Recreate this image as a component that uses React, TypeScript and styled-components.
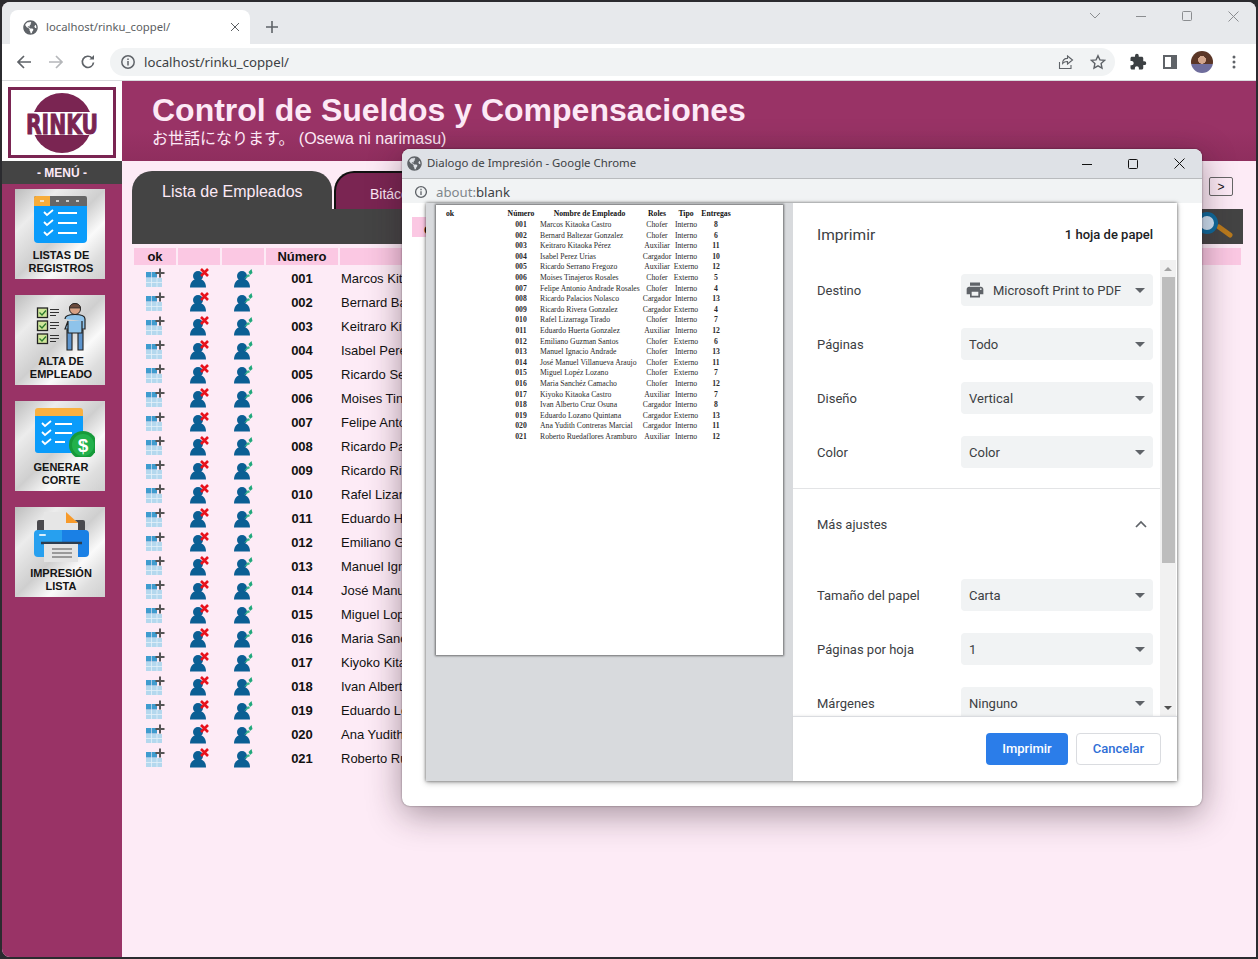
import React from "react";
import styled, { createGlobalStyle } from "styled-components";
import { FaGlobeAmericas } from "react-icons/fa";
import { MdExtension, MdPrint } from "react-icons/md";

const Global = createGlobalStyle`
  html, body { margin: 0; padding: 0; background: #2b2b2f; }
  * { box-sizing: border-box; }
`;

const Screen = styled.div`
  position: relative;
  width: 1258px;
  height: 959px;
  padding: 2px;
  background: #2b2b2f;
  overflow: hidden;
  font-family: "Liberation Sans", Arial, sans-serif;
`;
const Browser = styled.div`
  width: 1254px;
  height: 955px;
  border-radius: 8px 8px 0 8px;
  overflow: hidden;
  display: flex;
  flex-direction: column;
  background: #fdebf6;
`;
const TabStrip = styled.div`
  height: 42px;
  flex: none;
  background: #e7e9ec;
  display: flex;
  align-items: flex-end;
  padding-left: 8px;
`;
const BrowserTab = styled.div`
  width: 240px;
  height: 34px;
  background: #fff;
  border-radius: 8px 8px 0 0;
  display: flex;
  align-items: center;
  padding: 0 10px 0 13px;
  gap: 8px;
  color: #5b5e62;
  font: 11.3px "Noto Sans", sans-serif;
`;
const TabTitle = styled.span`
  flex: 1;
  padding-bottom: 2px;
`;
const NewTab = styled.div`
  width: 44px;
  height: 34px;
  display: flex;
  align-items: center;
  justify-content: center;
`;
const WindowControls = styled.div`
  margin-left: auto;
  height: 42px;
  display: flex;
  align-items: center;
  padding: 0 0 14px 0;
`;
const WindowButton = styled.div`
  width: 46px;
  display: flex;
  justify-content: center;
  color: #8b8d90;
`;
const Toolbar = styled.div`
  height: 36px;
  flex: none;
  background: #fff;
  display: flex;
  align-items: center;
  color: #5f6368;
`;
const NavButton = styled.div<{ $c?: string }>`
  width: 32px;
  display: flex;
  justify-content: center;
  color: ${(p) => p.$c ?? "#5f6368"};
`;
const NavGroup = styled.div`
  display: flex;
  padding-left: 6px;
  width: 108px;
  flex: none;
`;
const Omnibox = styled.div`
  width: 1005px;
  height: 28px;
  flex: none;
  border-radius: 14px;
  background: #f1f3f4;
  display: flex;
  align-items: center;
  padding: 0 1px 0 10px;
  gap: 8px;
  font: 13.2px "Noto Sans", sans-serif;
  color: #3c4043;
`;
const OmniText = styled.span`
  flex: 1;
`;
const OmniIcons = styled.div`
  display: flex;
  align-items: center;
`;
const OmniIcon = styled.div`
  width: 32px;
  display: flex;
  justify-content: center;
  color: #5f6368;
`;
const Avatar = styled.div`
  width: 22px;
  height: 22px;
  border-radius: 50%;
  background: radial-gradient(circle at 50% 40%, #d2a58c 0 22%, transparent 24%),
    linear-gradient(180deg, #5b3626 0 58%, #6f6d9c 60%);
`;
const ToolbarEnd = styled.div`
  display: flex;
  align-items: center;
  padding-left: 7px;
`;
const Divider = styled.div`
  height: 1px;
  flex: none;
  background: #d9dbde;
`;

const Page = styled.div`
  flex: 1;
  display: flex;
  min-height: 0;
`;
const Sidebar = styled.aside`
  width: 120px;
  flex: none;
  background: #993366;
  display: flex;
  flex-direction: column;
  align-items: center;
`;
const LogoArea = styled.div`
  width: 100%;
  height: 80px;
  background: #fff;
  padding: 6px 6px 3px 6px;
  flex: none;
`;
const LogoFrame = styled.div`
  width: 108px;
  height: 71px;
  border: 3px solid #7a2552;
  display: flex;
  align-items: center;
  justify-content: center;
`;
const MenuBar = styled.div`
  width: 100%;
  height: 23px;
  flex: none;
  background: #444;
  color: #fde9f6;
  font-size: 12px;
  font-weight: bold;
  display: flex;
  align-items: center;
  justify-content: center;
  margin-bottom: 5px;
`;
const MenuList = styled.div`
  display: flex;
  flex-direction: column;
  gap: 16px;
  margin-right: 4px;
`;
const MenuCard = styled.div`
  width: 90px;
  height: 90px;
  background: linear-gradient(135deg, #bcbcbc 0%, #ececec 24%, #cfcfcf 50%, #fafafa 68%, #dedede 84%, #cfcfcf 100%);
  display: flex;
  flex-direction: column;
  align-items: center;
  padding-top: 4px;
`;
const CardIcon = styled.svg`
  width: 70px;
  height: 52px;
  flex: none;
  display: block;
`;
const CardLabel = styled.div`
  font-size: 11px;
  line-height: 13px;
  font-weight: bold;
  color: #141414;
  text-align: center;
  margin-top: 4px;
  padding-left: 2px;
`;

const Main = styled.main`
  flex: 1;
  min-width: 0;
  display: flex;
  flex-direction: column;
`;
const Header = styled.header`
  height: 80px;
  flex: none;
  background: linear-gradient(180deg, #993366 0%, #993366 60%, #8f2e5e 100%);
  color: #fde9f6;
  padding: 11px 0 0 30px;
`;
const Title = styled.h1`
  margin: 0;
  font-size: 32px;
  line-height: 36px;
  font-weight: bold;
`;
const Subtitle = styled.div`
  font: 16px/20px "Liberation Sans", "Noto Sans CJK JP", sans-serif;
  margin-top: 1px;
`;
const Content = styled.div`
  flex: 1;
  padding: 10px 13px 0 10px;
  display: flex;
  flex-direction: column;
`;
const TabsRow = styled.div`
  display: flex;
  height: 38px;
  gap: 2px;
  flex: none;
`;
const ActiveTab = styled.div`
  width: 200px;
  height: 38px;
  background: #444;
  color: #fde9f6;
  border-radius: 20px 20px 0 0;
  font-size: 16px;
  padding: 12px 0 0 30px;
`;
const OtherTab = styled.div`
  width: 200px;
  height: 38px;
  background: #7a2552;
  border: 2px solid #111;
  border-bottom: none;
  border-radius: 20px 20px 0 0;
  color: #fde9f6;
  font-size: 14px;
  padding: 13px 0 0 34px;
`;
const NextButton = styled.button`
  margin: 6px 10px 0 auto;
  width: 24px;
  height: 19px;
  padding: 0;
  border: 1px solid #666;
  border-radius: 2px;
  background: #fdebf6;
  color: #111;
  font: 12px "Liberation Sans", sans-serif;
`;
const Panel = styled.div`
  height: 35px;
  flex: none;
  background: #444;
  display: flex;
  justify-content: flex-end;
  align-items: center;
  padding-right: 9px;
`;
const Table = styled.div`
  margin: 4px 2px 0 2px;
  display: grid;
  grid-template-columns: 42px 42px 42px 72px 1fr;
  column-gap: 2px;
  grid-auto-rows: 24px;
`;
const HeadCell = styled.div`
  height: 17px;
  background: #fbc8e3;
  color: #111;
  font-size: 13px;
  font-weight: bold;
  line-height: 18px;
  text-align: center;
`;
const HeadRow = styled.div`
  display: contents;
`;
const IconCell = styled.div`
  display: flex;
  align-items: center;
  justify-content: center;
  height: 24px;
  margin-top: -6px;
`;
const NumCell = styled.div`
  font-size: 13px;
  font-weight: bold;
  color: #111;
  text-align: center;
  line-height: 24px;
  margin-top: -5px;
`;
const NameCell = styled.div`
  font-size: 13px;
  color: #111;
  line-height: 24px;
  margin-top: -5px;
  padding-left: 1px;
`;

/* Print dialog: a window floating over the page */
const Dialog = styled.section`
  position: absolute;
  left: 402px;
  top: 149px;
  width: 800px;
  height: 657px;
  background: #fff;
  border-radius: 8px;
  overflow: hidden;
  box-shadow: 0 8px 34px rgba(40, 20, 30, 0.42), 0 0 2px rgba(0, 0, 0, 0.5);
  display: flex;
  flex-direction: column;
`;
const DialogTitleBar = styled.div`
  height: 30px;
  flex: none;
  background: #dee1e6;
  border-bottom: 1px solid #b9bbbe;
  display: flex;
  align-items: center;
  padding-left: 5px;
  color: #3c4043;
  font: 11.4px "Noto Sans", sans-serif;
`;
const DialogTitle = styled.span`
  flex: 1;
  margin-left: 5px;
  padding-bottom: 2px;
`;
const DialogControl = styled.div`
  width: 46px;
  display: flex;
  justify-content: center;
  color: #111;
`;
const DialogAddress = styled.div`
  height: 24px;
  flex: none;
  background: #f1f3f4;
  display: flex;
  align-items: center;
  padding: 2px 0 0 12px;
  gap: 8px;
  font: 13.2px "Noto Sans", sans-serif;
  color: #3c4043;
`;
const Muted = styled.span`
  color: #80868b;
`;
const DialogBody = styled.div`
  position: relative;
  flex: 1;
  padding: 14px 0 0 10px;
`;
const BlankPink = styled.div`
  width: 14px;
  height: 20px;
  background: #fbc8e3;
  overflow: hidden;
  padding-left: 12px;
  font: bold 14px/24px "Liberation Sans", sans-serif;
  white-space: nowrap;
  color: #111;
`;
const PrintSheet = styled.div`
  position: absolute;
  left: 24px;
  top: 0;
  width: 751px;
  height: 578px;
  background: #fff;
  box-shadow: 0 0 3px rgba(0, 0, 0, 0.55), 0 2px 6px rgba(0, 0, 0, 0.25);
  display: flex;
`;
const Preview = styled.div`
  width: 367px;
  flex: none;
  background: #d8dadd;
  padding: 2px 0 0 10px;
`;
const Paper = styled.div`
  width: 347px;
  height: 450px;
  background: #fff;
  box-shadow: 0 0 2px 1px rgba(0, 0, 0, 0.5);
  padding: 4px 0 0 9px;
  font-family: "Liberation Serif", "Times New Roman", serif;
  font-size: 7.7px;
  color: #222;
`;
const PaperRow = styled.div<{ $head?: boolean }>`
  display: grid;
  grid-template-columns: 60px 32px 105px 30px 28px 32px;
  height: ${(p) => (p.$head ? "11px" : "10.6px")};
  line-height: 10.6px;
  font-weight: ${(p) => (p.$head ? "bold" : "normal")};
  color: ${(p) => (p.$head ? "#111" : "#2a2a2a")};
  white-space: nowrap;
`;
const PaperCell = styled.span<{ $bold?: boolean; $left?: boolean; $pad?: number }>`
  text-align: ${(p) => (p.$left ? "left" : "center")};
  font-weight: ${(p) => (p.$bold ? "bold" : "inherit")};
  padding-left: ${(p) => p.$pad ?? 0}px;
`;
const Settings = styled.div`
  flex: 1;
  min-width: 0;
  display: flex;
  flex-direction: column;
  font: 13px Roboto, sans-serif;
  color: #3c4043;
`;
const SettingsHead = styled.div`
  height: 57px;
  flex: none;
  display: flex;
  justify-content: space-between;
  align-items: center;
  padding: 6px 24px 0 24px;
`;
const SettingsTitle = styled.div`
  font-size: 15.5px;
  color: #3c4043;
`;
const SheetCount = styled.div`
  font-size: 13px;
  font-weight: 500;
  color: #202124;
`;
const ScrollArea = styled.div`
  height: 456px;
  flex: none;
  display: flex;
  overflow: hidden;
`;
const ScrollContent = styled.div`
  flex: 1;
  min-width: 0;
  padding-top: 14px;
`;
const SettingRow = styled.div<{ $after?: number }>`
  height: 32px;
  display: flex;
  align-items: center;
  justify-content: space-between;
  padding: 0 7px 0 24px;
  margin-bottom: ${(p) => p.$after ?? 22}px;
`;
const Select = styled.div`
  width: 192px;
  height: 32px;
  background: #f1f3f4;
  border-radius: 4px;
  display: flex;
  align-items: center;
  padding: 0 8px;
  gap: 8px;
  color: #3c4043;
`;
const SelectIcon = styled.span`
  display: flex;
  margin-left: -4px;
`;
const SelectText = styled.span`
  flex: 1;
`;
const Caret = styled.span`
  width: 0;
  height: 0;
  border-left: 5px solid transparent;
  border-right: 5px solid transparent;
  border-top: 5px solid #5f6368;
`;
const Rule = styled.div`
  height: 1px;
  background: #e3e4e6;
  margin: 20px 0 19px 0;
`;
const Scrollbar = styled.div`
  width: 16px;
  flex: none;
  background: #f1f1f1;
  display: flex;
  flex-direction: column;
  align-items: center;
  margin-right: 1px;
`;
const ScrollArrow = styled.div<{ $down?: boolean }>`
  height: 17px;
  flex: none;
  display: flex;
  align-items: center;
  justify-content: center;
  &::after {
    content: "";
    border-left: 4px solid transparent;
    border-right: 4px solid transparent;
    ${(p) => (p.$down ? "border-top: 4px solid #505050;" : "border-bottom: 4px solid #a3a3a3;")}
  }
`;
const ScrollThumb = styled.div`
  width: 13px;
  height: 286px;
  background: #bdbdbd;
  flex: none;
`;
const ScrollFill = styled.div`
  flex: 1;
`;
const Footer = styled.div`
  flex: 1;
  border-top: 1px solid #dadce0;
  box-shadow: 0 -1px 2px rgba(0, 0, 0, 0.06);
  display: flex;
  justify-content: flex-end;
  align-items: flex-start;
  gap: 8px;
  padding: 16px 16px 0 0;
`;
const PrimaryButton = styled.button`
  width: 82px;
  height: 32px;
  border: none;
  border-radius: 4px;
  padding: 0 0 2px;
  background: #2b7de9;
  color: #fff;
  font: 500 13px Roboto, sans-serif;
`;
const SecondaryButton = styled.button`
  width: 85px;
  height: 32px;
  border: 1px solid #dadce0;
  border-radius: 4px;
  padding: 0 0 2px;
  background: #fff;
  color: #2f6fd6;
  font: 500 13px Roboto, sans-serif;
`;

const names = [
  "Marcos Kitaoka Castro", "Bernard Baltezar Gonzalez", "Keitraro Kitaoka Pérez", "Isabel Perez Urias",
  "Ricardo Serrano Fregozo", "Moises Tinajeros Rosales", "Felipe Antonio Andrade Rosales", "Ricardo Palacios Nolasco",
  "Ricardo Rivera Gonzalez", "Rafel Lizarraga Tirado", "Eduardo Huerta Gonzalez", "Emiliano Guzman Santos",
  "Manuel Ignacio Andrade", "José Manuel Villanueva Araujo", "Miguel Lopéz Lozano", "Maria Sanchéz Camacho",
  "Kiyoko Kitaoka Castro", "Ivan Alberto Cruz Osuna", "Eduardo Lozano Quintana", "Ana Yudith Contreras Marcial",
  "Roberto Ruedaflores Aramburo",
];
const roles = ["Chofer","Chofer","Auxiliar","Cargador","Auxiliar","Chofer","Chofer","Cargador","Cargador","Chofer","Auxiliar","Chofer","Chofer","Chofer","Chofer","Chofer","Auxiliar","Cargador","Cargador","Cargador","Auxiliar"];
const tipos = ["Interno","Interno","Interno","Interno","Externo","Externo","Interno","Interno","Externo","Interno","Interno","Externo","Interno","Externo","Externo","Interno","Interno","Interno","Externo","Interno","Interno"];
const entregas = [8,6,11,10,12,5,4,13,4,7,12,6,13,11,7,12,7,8,13,11,12];
const pad = (n: number) => String(n).padStart(3, "0");

const Line = ({ w = 10, h = 10, d }: { w?: number; h?: number; d: string }) => (
  <svg width={w} height={h} viewBox={`0 0 ${w} ${h}`} fill="none" stroke="currentColor" strokeWidth="1">
    <path d={d} />
  </svg>
);

const InfoIcon = ({ s = 16 }: { s?: number }) => (
  <svg width={s} height={s} viewBox="0 0 16 16" fill="none" stroke="#5f6368" strokeWidth="1.5">
    <circle cx="8" cy="8" r="6.2" />
    <path d="M8 7v4.4M8 4.4v1.5" />
  </svg>
);

const AddIcon = () => (
  <svg width="20" height="20" viewBox="0 0 20 20">
    <path d="M1 4h5.400v5.400H1zM7 4h5v5.400H7z" fill="#3f9ccf" />
    <path d="M1 10h16v9H1z" fill="#b4d8ee" />
    <path d="M1 14.500h16M6.500 10v9M12 10v9" stroke="#e4f1f9" strokeWidth=".8" />
    <path d="M15 .5v9M10.500 5h9" stroke="#555" strokeWidth="2" />
  </svg>
);
const Person = () => (
  <>
    <circle cx="9" cy="8" r="5" fill="#0b5f94" />
    <path d="M1 19.500c0-6 3.500-8.500 8-8.500s8 2.500 8 8.500z" fill="#0b5f94" />
  </>
);
const DeleteIcon = () => (
  <svg width="20" height="20" viewBox="0 0 20 20">
    <Person />
    <path d="M12 1l7 7M19 1l-7 7" stroke="#e8121c" strokeWidth="2.6" />
  </svg>
);
const EditIcon = () => (
  <svg width="20" height="20" viewBox="0 0 20 20">
    <Person />
    <path d="M11 11l4-5 2.200 2z" fill="#35b58c" />
    <path d="M15.500 4l3-3 1 4-2.500 2z" fill="#21a87c" />
  </svg>
);
const SearchIcon = () => (
  <svg width="44" height="30" viewBox="0 0 44 30">
    <path d="M29 15l11 8" stroke="#b97a1d" strokeWidth="5" strokeLinecap="round" />
    <circle cx="17" cy="11" r="9" fill="#cfe4f5" stroke="#0d6a9c" strokeWidth="4" />
  </svg>
);

const Check = ({ x, y, c = "#fff" }: { x: number; y: number; c?: string }) => (
  <path d={`M${x} ${y}l3 3 6-5`} fill="none" stroke={c} strokeWidth="1.8" />
);

const ListsIcon = () => (
  <CardIcon viewBox="0 0 70 52">
    <path d="M9 5a2 2 0 0 1 2-2h49a2 2 0 0 1 2 2v8H9z" fill="#666" />
    <path d="M9 5a2 2 0 0 1 2-2h14v10H9z" fill="#f7ac3a" />
    <path d="M9 13h53v33a4 4 0 0 1-4 4H13a4 4 0 0 1-4-4z" fill="#0a9cfb" />
    <path d="M15 8h4M31 8h3M41 8h3M51 8h3" stroke="#eee" strokeWidth="1.4" />
    <Check x={19} y={19} />
    <Check x={19} y={29} />
    <Check x={19} y={39} />
    <path d="M33 20h19M33 30h19M33 40h19" stroke="#fff" strokeWidth="2" />
  </CardIcon>
);
const HireIcon = () => (
  <CardIcon viewBox="0 0 70 52">
    {[9, 22, 35].map((y) => (
      <g key={y}>
        <rect x="12.5" y={y} width="10" height="9.5" fill="#cfe69a" stroke="#222" strokeWidth="1.3" />
        <path d={`M14.5 ${y + 4.5}l2.5 2.5 4-4.5`} fill="none" stroke="#2c7a2e" strokeWidth="1.3" />
        <path d={`M25 ${y + 1.5}h9M25 ${y + 4.5}h9M25 ${y + 7.5}h6`} stroke="#333" strokeWidth="1.2" />
      </g>
    ))}
    <g transform="translate(0 2)">
      <circle cx="50" cy="8" r="5.5" fill="#d8a184" stroke="#222" strokeWidth="1" />
      <path d="M44.5 7c0-6 11-6 11 0z" fill="#6b4a3c" stroke="#222" strokeWidth=".7" />
      <path d="M47 29v20h-5V29zM53 29v20h5V29z" fill="#5d94cd" stroke="#222" strokeWidth="1.1" />
      <path d="M40 18c0-3 3-4.500 10-4.500s10 1.500 10 4.500v10h-3v-8M43 20v8h-3zM43 20v12h14V20" fill="#8ec3ea" stroke="#222" strokeWidth="1.2" />
    </g>
  </CardIcon>
);
const CutIcon = () => (
  <CardIcon viewBox="0 0 70 52">
    <path d="M10 6a3 3 0 0 1 3-3h42a3 3 0 0 1 3 3v6H10z" fill="#f9b03f" />
    <path d="M10 11h48v34a3 3 0 0 1-3 3H13a3 3 0 0 1-3-3z" fill="#0a9cfb" />
    <Check x={17} y={18} />
    <Check x={17} y={27} />
    <Check x={17} y={36} />
    <path d="M30 19h17M30 28h17M30 37h10" stroke="#fff" strokeWidth="2" />
    <circle cx="58" cy="40" r="14" fill="#169a3a" />
    <circle cx="58" cy="40" r="11" fill="#22b14c" />
    <text x="58" y="47" textAnchor="middle" fontFamily="Liberation Sans" fontWeight="bold" fontSize="19" fill="#fff">$</text>
  </CardIcon>
);
const PrintIcon = () => (
  <CardIcon viewBox="0 0 70 52">
    <path d="M12 11a2 2 0 0 1 2-2h44a2 2 0 0 1 2 2v10H12z" fill="#4a4a4e" />
    <path d="M19 1h22l12 11v9H19z" fill="#e6e6e6" />
    <path d="M41 1l12 11H41z" fill="#f79a2a" />
    <path d="M9 23a4 4 0 0 1 4-4h24v27H13a4 4 0 0 1-4-4z" fill="#27a0ef" />
    <path d="M37 19h23a4 4 0 0 1 4 4v19a4 4 0 0 1-4 4H37z" fill="#1a80e5" />
    <path d="M15 24h5" stroke="#d8eefc" strokeWidth="2" strokeLinecap="round" />
    <path d="M16 32h41" stroke="#2e3d4e" strokeWidth="2.4" />
    <rect x="19" y="33" width="34" height="18" fill="#e4e4e4" />
    <path d="M27 38h20M27 42h20M27 46h20" stroke="#9a9a9a" strokeWidth="2" />
  </CardIcon>
);

const Logo = () => (
  <svg width="102" height="65" viewBox="0 0 102 65">
    <circle cx="51" cy="33" r="30" fill="#7a2552" />
    <rect x="0" y="22" width="102" height="23" fill="#fff" />
    <text x="51" y="44" textAnchor="middle" textLength="72" lengthAdjust="spacingAndGlyphs" fontFamily="DejaVu Sans" fontWeight="bold" fontSize="27" stroke="#7a2552" strokeWidth="1" fill="#7a2552">RINKU</text>
  </svg>
);

export default function App() {
  return (
    <Screen>
      <Global />
      <Browser>
        <TabStrip>
          <BrowserTab>
            <FaGlobeAmericas size={15} color="#5f6368" />
            <TabTitle>localhost/rinku_coppel/</TabTitle>
            <Line d="M1 1l8 8M9 1l-8 8" />
          </BrowserTab>
          <NewTab>
            <svg width="14" height="14" viewBox="0 0 14 14" stroke="#5f6368" strokeWidth="1.6"><path d="M7 1v12M1 7h12" /></svg>
          </NewTab>
          <WindowControls>
            <WindowButton><Line w={12} h={8} d="M1 1l5 5 5-5" /></WindowButton>
            <WindowButton><Line d="M0 5.5h10" /></WindowButton>
            <WindowButton><Line d="M1.5 .5h7a1 1 0 0 1 1 1v7a1 1 0 0 1-1 1h-7a1 1 0 0 1-1-1v-7a1 1 0 0 1 1-1z" /></WindowButton>
            <WindowButton><Line w={11} h={11} d="M.5.5l10 10M10.5.5l-10 10" /></WindowButton>
          </WindowControls>
        </TabStrip>
        <Toolbar>
          <NavGroup>
            <NavButton>
              <svg width="16" height="16" viewBox="0 0 16 16" fill="none" stroke="currentColor" strokeWidth="1.7"><path d="M15 8H2M8 2L2 8l6 6" /></svg>
            </NavButton>
            <NavButton $c="#b5b7ba">
              <svg width="16" height="16" viewBox="0 0 16 16" fill="none" stroke="currentColor" strokeWidth="1.7"><path d="M1 8h13M8 2l6 6-6 6" /></svg>
            </NavButton>
            <NavButton>
              <svg width="16" height="16" viewBox="0 0 16 16" fill="none" stroke="currentColor" strokeWidth="1.7"><path d="M13.5 8.500A5.600 5.600 0 1 1 12 4" /><path d="M14 1v4.600H9.400z" fill="currentColor" stroke="none" /></svg>
            </NavButton>
          </NavGroup>
          <Omnibox>
            <InfoIcon />
            <OmniText>localhost/rinku_coppel/</OmniText>
            <OmniIcons>
              <OmniIcon>
                <svg width="16" height="16" viewBox="0 0 16 16" fill="none" stroke="currentColor" strokeWidth="1.1"><path d="M1.500 8v6.500H13V11M14.500 6L9.500 2v2.400C6 4.400 4.600 7 4.600 9.500 6 7.800 7.500 7.400 9.500 7.500V10z" /></svg>
              </OmniIcon>
              <OmniIcon>
                <svg width="16" height="16" viewBox="0 0 16 16" fill="none" stroke="currentColor" strokeWidth="1.4"><path d="M8 1.700l1.900 4.200 4.600.5-3.400 3.100.9 4.600L8 11.800l-4 2.300.9-4.600L1.500 6.400l4.600-.5z" /></svg>
              </OmniIcon>
            </OmniIcons>
          </Omnibox>
          <ToolbarEnd>
            <NavButton $c="#3c4043">
              <MdExtension size={18} />
            </NavButton>
            <NavButton>
              <svg width="14" height="14" viewBox="0 0 14 14"><path d="M0 0h14v14H0zM2 2v10h6V2z" fill="currentColor" fillRule="evenodd" /></svg>
            </NavButton>
            <NavButton><Avatar /></NavButton>
            <NavButton>
              <svg width="4" height="14" viewBox="0 0 4 14" fill="currentColor"><circle cx="2" cy="2" r="1.5" /><circle cx="2" cy="7" r="1.5" /><circle cx="2" cy="12" r="1.5" /></svg>
            </NavButton>
          </ToolbarEnd>
        </Toolbar>
        <Divider />
        <Page>
          <Sidebar>
            <LogoArea>
              <LogoFrame><Logo /></LogoFrame>
            </LogoArea>
            <MenuBar>- MENÚ -</MenuBar>
            <MenuList>
              <MenuCard><ListsIcon /><CardLabel>LISTAS DE<br />REGISTROS</CardLabel></MenuCard>
              <MenuCard><HireIcon /><CardLabel>ALTA DE<br />EMPLEADO</CardLabel></MenuCard>
              <MenuCard><CutIcon /><CardLabel>GENERAR<br />CORTE</CardLabel></MenuCard>
              <MenuCard><PrintIcon /><CardLabel>IMPRESIÓN<br />LISTA</CardLabel></MenuCard>
            </MenuList>
          </Sidebar>
          <Main>
            <Header>
              <Title>Control de Sueldos y Compensaciones</Title>
              <Subtitle>お世話になります。 (Osewa ni narimasu)</Subtitle>
            </Header>
            <Content>
              <TabsRow>
                <ActiveTab>Lista de Empleados</ActiveTab>
                <OtherTab>Bitácora de Entregas</OtherTab>
                <NextButton>&gt;</NextButton>
              </TabsRow>
              <Panel><SearchIcon /></Panel>
              <Table>
                <HeadRow>
                  <HeadCell>ok</HeadCell>
                  <HeadCell />
                  <HeadCell />
                  <HeadCell>Número</HeadCell>
                  <HeadCell />
                </HeadRow>
                {names.map((n, i) => (
                  <React.Fragment key={n}>
                    <IconCell><AddIcon /></IconCell>
                    <IconCell><DeleteIcon /></IconCell>
                    <IconCell><EditIcon /></IconCell>
                    <NumCell>{pad(i + 1)}</NumCell>
                    <NameCell>{n}</NameCell>
                  </React.Fragment>
                ))}
              </Table>
            </Content>
          </Main>
        </Page>
      </Browser>

      <Dialog>
        <DialogTitleBar>
          <FaGlobeAmericas size={15} color="#5f6368" />
          <DialogTitle>Dialogo de Impresión - Google Chrome</DialogTitle>
          <DialogControl><Line d="M0 5.5h10" /></DialogControl>
          <DialogControl><Line d="M1.5 .5h7a1 1 0 0 1 1 1v7a1 1 0 0 1-1 1h-7a1 1 0 0 1-1-1v-7a1 1 0 0 1 1-1z" /></DialogControl>
          <DialogControl><Line w={11} h={11} d="M.5.5l10 10M10.5.5l-10 10" /></DialogControl>
        </DialogTitleBar>
        <DialogAddress>
          <InfoIcon s={14} />
          <span><Muted>about:</Muted>blank</span>
        </DialogAddress>
        <DialogBody>
          <BlankPink>ok</BlankPink>
          <PrintSheet>
            <Preview>
              <Paper>
                <PaperRow $head>
                  <PaperCell $left $pad={1}>ok</PaperCell>
                  <PaperCell>Número</PaperCell>
                  <PaperCell>Nombre de Empleado</PaperCell>
                  <PaperCell>Roles</PaperCell>
                  <PaperCell>Tipo</PaperCell>
                  <PaperCell>Entregas</PaperCell>
                </PaperRow>
                {names.map((n, i) => (
                  <PaperRow key={n}>
                    <span />
                    <PaperCell $bold>{pad(i + 1)}</PaperCell>
                    <PaperCell $left $pad={3}>{n}</PaperCell>
                    <PaperCell>{roles[i]}</PaperCell>
                    <PaperCell>{tipos[i]}</PaperCell>
                    <PaperCell $bold>{entregas[i]}</PaperCell>
                  </PaperRow>
                ))}
              </Paper>
            </Preview>
            <Settings>
              <SettingsHead>
                <SettingsTitle>Imprimir</SettingsTitle>
                <SheetCount>1 hoja de papel</SheetCount>
              </SettingsHead>
              <ScrollArea>
                <ScrollContent>
                  <SettingRow>
                    <span>Destino</span>
                    <Select>
                      <SelectIcon><MdPrint size={20} color="#5f6368" /></SelectIcon>
                      <SelectText>Microsoft Print to PDF</SelectText>
                      <Caret />
                    </Select>
                  </SettingRow>
                  <SettingRow><span>Páginas</span><Select><SelectText>Todo</SelectText><Caret /></Select></SettingRow>
                  <SettingRow><span>Diseño</span><Select><SelectText>Vertical</SelectText><Caret /></Select></SettingRow>
                  <SettingRow $after={0}><span>Color</span><Select><SelectText>Color</SelectText><Caret /></Select></SettingRow>
                  <Rule />
                  <SettingRow $after={39}>
                    <span>Más ajustes</span>
                    <svg width="20" height="12" viewBox="0 0 20 12" fill="none" stroke="#5f6368" strokeWidth="1.7"><path d="M3 9l5-5 5 5" /></svg>
                  </SettingRow>
                  <SettingRow><span>Tamaño del papel</span><Select><SelectText>Carta</SelectText><Caret /></Select></SettingRow>
                  <SettingRow><span>Páginas por hoja</span><Select><SelectText>1</SelectText><Caret /></Select></SettingRow>
                  <SettingRow><span>Márgenes</span><Select><SelectText>Ninguno</SelectText><Caret /></Select></SettingRow>
                </ScrollContent>
                <Scrollbar>
                  <ScrollArrow />
                  <ScrollThumb />
                  <ScrollFill />
                  <ScrollArrow $down />
                </Scrollbar>
              </ScrollArea>
              <Footer>
                <PrimaryButton>Imprimir</PrimaryButton>
                <SecondaryButton>Cancelar</SecondaryButton>
              </Footer>
            </Settings>
          </PrintSheet>
        </DialogBody>
      </Dialog>
    </Screen>
  );
}
